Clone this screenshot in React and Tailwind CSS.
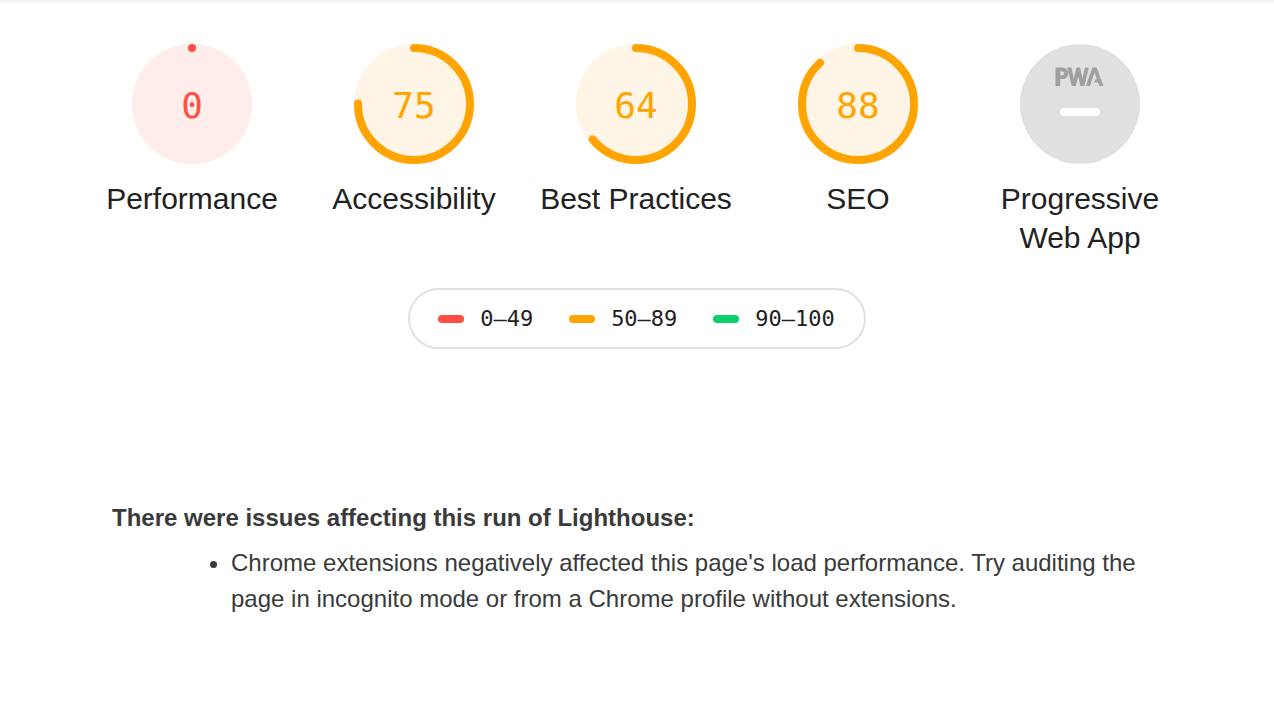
import React from "react";

const C = 2 * Math.PI * 56;

function Gauge({ score, color, bg, label }) {
  return (
    <div className="w-[222px] flex flex-col items-center shrink-0">
      <svg width="120" height="120" viewBox="0 0 120 120">
        <circle cx="60" cy="60" r="56" fill={bg} stroke={bg} strokeWidth="8" />
        <circle
          cx="60"
          cy="60"
          r="56"
          fill="none"
          stroke={color}
          strokeWidth="8"
          strokeLinecap="round"
          strokeDasharray={`${Math.max((score / 100) * C, 0.01)} ${C}`}
          transform="rotate(-90 60 60)"
        />
        <text
          x="60"
          y="61"
          textAnchor="middle"
          dominantBaseline="central"
          fill={color}
          style={{ fontFamily: '"DejaVu Sans Mono", monospace', fontSize: "36px" }}
        >
          {score}
        </text>
      </svg>
      <div className="mt-[15px] max-w-[210px] text-center text-[30px] leading-[39px] text-[#212121]">
        {label}
      </div>
    </div>
  );
}

function PwaGauge() {
  return (
    <div className="w-[222px] flex flex-col items-center shrink-0">
      <svg width="120" height="120" viewBox="0 0 120 120">
        <circle cx="60" cy="60" r="60" fill="#e0e0e0" />
        <g fill="#a0a0a0">
          <path
            fillRule="evenodd"
            d="M35.5 42 V23.5 H42.6 a5.8 5.8 0 0 1 0 11.6 H40.2 V42 Z M40.2 27.4 H42.2 a1.9 1.9 0 0 1 0 3.8 H40.2 Z"
          />
          <polygon points="47.2,23.5 51.4,23.5 53.8,34.6 56.5,23.5 60,23.5 62.5,34.6 64.8,23.5 68.9,23.5 64.4,42 60.4,42 58.2,32.2 55.8,42 51.8,42" />
          <polygon points="72.4,23.5 76.6,23.5 83.5,42 79.3,42 78.1,38.6 74.2,38.6 75.4,35.2 76.9,35.2 74.6,28.6 69.8,42 65.8,42" />
        </g>
        <rect x="40" y="64" width="40" height="8" rx="4" fill="#ffffff" />
      </svg>
      <div className="mt-[15px] max-w-[210px] text-center text-[30px] leading-[39px] text-[#212121]">
        Progressive Web App
      </div>
    </div>
  );
}

function LegendItem({ color, text, last }) {
  return (
    <div className={`flex items-center ${last ? "" : "mr-[36px]"}`}>
      <span className={`block w-[26px] h-[8px] rounded-full ${color}`} />
      <span
        className="ml-[16px] text-[22px] leading-none text-[#212121]"
        style={{ fontFamily: '"DejaVu Sans Mono", monospace' }}
      >
        {text}
      </span>
    </div>
  );
}

export default function App() {
  return (
    <div
      className="min-h-[707px] bg-white border-t-2 border-[#f2f2f2]"
      style={{ fontFamily: '"Liberation Sans", Arial, sans-serif' }}
    >
      <div className="flex justify-center pt-[42px] pr-[2px]">
        <Gauge score={0} color="#ff4e42" bg="#ffedec" label="Performance" />
        <Gauge score={75} color="#ffa400" bg="#fff5e6" label="Accessibility" />
        <Gauge score={64} color="#ffa400" bg="#fff5e6" label="Best Practices" />
        <Gauge score={88} color="#ffa400" bg="#fff5e6" label="SEO" />
        <PwaGauge />
      </div>

      <div className="flex justify-center mt-[31px]">
        <div className="flex items-center h-[61px] pl-[28px] pr-[29px] border-2 border-[#e0e0e0] rounded-full">
          <LegendItem color="bg-[#ff4e42]" text="0–49" />
          <LegendItem color="bg-[#ffa400]" text="50–89" />
          <LegendItem color="bg-[#0cce6b]" text="90–100" last />
        </div>
      </div>

      <div className="w-[1050px] mx-auto mt-[151px] text-[#3a3a3a]">
        <div className="text-[24px] leading-[36px] font-bold">
          There were issues affecting this run of Lighthouse:
        </div>
        <ul className="list-disc pl-[119px] mt-[9px] text-[24px] leading-[36px]">
          <li>
            Chrome extensions negatively affected this page's load performance. Try auditing the
            page in incognito mode or from a Chrome profile without extensions.
          </li>
        </ul>
      </div>
    </div>
  );
}
